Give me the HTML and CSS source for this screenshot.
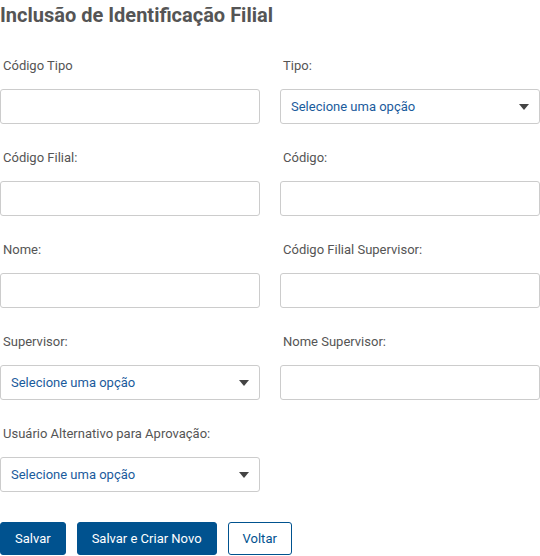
FILE: index.html
```html
<!DOCTYPE html>
<html lang="pt">
<head>
<meta charset="utf-8">
<link rel="stylesheet" href="styles.css">
</head>
<body>
<div class="page">
  <h2 class="title">Inclusão de Identificação Filial</h2>
  <form class="form">
    <div class="field"><label>Código Tipo</label><input class="input" type="text"></div>
    <div class="field"><label>Tipo:</label><div class="select"><span>Selecione uma opção</span><i class="caret"></i></div></div>
    <div class="field"><label>Código Filial:</label><input class="input" type="text"></div>
    <div class="field"><label>Código:</label><input class="input" type="text"></div>
    <div class="field"><label>Nome:</label><input class="input" type="text"></div>
    <div class="field"><label>Código Filial Supervisor:</label><input class="input" type="text"></div>
    <div class="field"><label>Supervisor:</label><div class="select"><span>Selecione uma opção</span><i class="caret"></i></div></div>
    <div class="field"><label>Nome Supervisor:</label><input class="input" type="text"></div>
    <div class="field"><label>Usuário Alternativo para Aprovação:</label><div class="select"><span>Selecione uma opção</span><i class="caret"></i></div></div>
  </form>
  <div class="actions">
    <button class="btn btn-primary" type="button">Salvar</button>
    <button class="btn btn-primary" type="button">Salvar e Criar Novo</button>
    <button class="btn btn-outline" type="button">Voltar</button>
  </div>
</div>
</body>
</html>
```
FILE: styles.css
```css
* { box-sizing: border-box; }
html, body { margin: 0; padding: 0; background: #fff; }
body { font-family: Roboto, "Noto Sans", Arial, sans-serif; color: #555; }
.page { width: 540px; }
.title {
  margin: 0;
  font-size: 20px;
  line-height: 30px;
  font-weight: 700;
  color: #555;
}
.form {
  margin-top: 26px;
  display: grid;
  grid-template-columns: 260px 260px;
  column-gap: 20px;
  row-gap: 24px;
}
.field { display: flex; flex-direction: column; }
.field label {
  font-size: 13px;
  line-height: 20px;
  height: 20px;
  padding-left: 3px;
  margin-bottom: 13px;
  color: #555;
}
.input, .select {
  height: 35px;
  width: 100%;
  border: 1px solid #ccc;
  border-radius: 3px;
  background: #fff;
  font-family: inherit;
  font-size: 13px;
}
.select {
  display: flex;
  align-items: center;
  justify-content: space-between;
  padding: 0 10px;
  color: #1b5b9c;
}
.caret {
  width: 0; height: 0;
  border-left: 5px solid transparent;
  border-right: 5px solid transparent;
  border-top: 6px solid #444;
}
.actions {
  margin-top: 30px;
  display: flex;
  gap: 11px;
}
.btn {
  height: 33px;
  padding: 0 14px;
  font-family: inherit;
  font-size: 13px;
  border-radius: 3px;
  border: 1px solid #00528f;
}
.btn-primary { background: #00528f; color: #fff; }
.btn-outline { background: #fff; color: #00528f; }
```
